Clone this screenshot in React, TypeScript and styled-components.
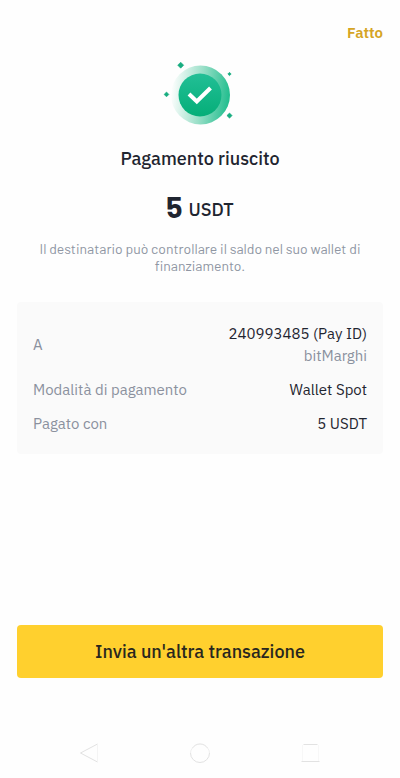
import React from "react";
import styled, { createGlobalStyle } from "styled-components";

const GlobalStyle = createGlobalStyle`
  * { box-sizing: border-box; }
  body {
    margin: 0;
    background: #fefefe;
    color: #1f2530;
    font-family: "IBM Plex Sans", Roboto, sans-serif;
  }
`;

const Screen = styled.div`
  min-height: 100vh;
  display: flex;
  flex-direction: column;
`;

const TopBar = styled.header`
  display: flex;
  justify-content: flex-end;
  padding: 21px 17px 0;
`;

const DoneButton = styled.button`
  border: 0;
  padding: 0;
  background: none;
  color: #d5a424;
  font: inherit;
  font-size: 15px;
  font-weight: 600;
  line-height: 24px;
  cursor: pointer;
`;

const Content = styled.main`
  flex: 1;
  display: flex;
  flex-direction: column;
  align-items: center;
  padding: 12px 17px 0;
`;

const SuccessIcon = styled.svg`
  display: block;
  width: 76px;
  height: 76px;
`;

const Title = styled.h1`
  margin: 14px 0 0;
  font-size: 18px;
  font-weight: 500;
  line-height: 24px;
`;

const Amount = styled.p`
  margin: 15px 0 0;
  display: flex;
  align-items: flex-end;
  gap: 6px;
  font-size: 18px;
  font-weight: 500;
  line-height: 32px;
`;

const AmountValue = styled.strong`
  font-family: "Barlow", "IBM Plex Sans", Roboto, sans-serif;
  font-size: 30px;
  font-weight: 700;
  line-height: 40px;
`;

const Note = styled.p`
  margin: 14px 0 0;
  padding: 0 20px;
  color: #8f96a3;
  font-family: "Barlow", "IBM Plex Sans", Roboto, sans-serif;
  font-size: 14px;
  line-height: 17px;
  text-align: center;
`;

const Details = styled.dl`
  align-self: stretch;
  margin: 28px 0 0;
  padding: 21px 16px 19px;
  display: flex;
  flex-direction: column;
  gap: 12px;
  border-radius: 4px;
  background: #fafafa;
  font-size: 15px;
  line-height: 22px;
`;

const DetailRow = styled.div`
  display: flex;
  align-items: center;
  justify-content: space-between;
`;

const Label = styled.dt`
  color: #8b919e;
`;

const Value = styled.dd`
  margin: 0;
  text-align: right;
`;

const Nickname = styled.div`
  color: #8b919e;
`;

const Footer = styled.footer`
  padding: 0 17px;
`;

const PrimaryButton = styled.button`
  display: block;
  width: 100%;
  height: 53px;
  border: 0;
  border-radius: 4px;
  background: #ffd02e;
  color: #28271f;
  font: inherit;
  font-size: 18px;
  font-weight: 500;
  cursor: pointer;
`;

const SystemNav = styled.nav`
  display: flex;
  justify-content: center;
  gap: 87px;
  padding: 63px 0 13px;
`;

const NavButton = styled.button`
  border: 0;
  padding: 0;
  background: none;
  cursor: pointer;

  svg {
    display: block;
    width: 24px;
    height: 24px;
    fill: none;
    stroke: #e2e2e2;
    stroke-width: 1;
  }
`;

export default function App() {
  return (
    <>
      <GlobalStyle />
      <Screen>
        <TopBar>
          <DoneButton type="button">Fatto</DoneButton>
        </TopBar>
        <Content>
          <SuccessIcon viewBox="0 0 76 76" aria-hidden="true">
            <defs>
              <linearGradient id="halo" x1="0" y1="0.45" x2="1" y2="0.55">
                <stop offset="0" stopColor="#fefefe" />
                <stop offset="0.5" stopColor="#9adfc8" />
                <stop offset="1" stopColor="#1fbd8d" />
              </linearGradient>
              <linearGradient id="disc" x1="0" y1="0" x2="0" y2="1">
                <stop offset="0" stopColor="#22bf96" />
                <stop offset="1" stopColor="#05ae78" />
              </linearGradient>
            </defs>
            <circle cx="38.5" cy="38" r="29.5" fill="url(#halo)" />
            <circle cx="38" cy="38" r="21.5" fill="url(#disc)" />
            <path d="M27 37L34.800 44.500L48.500 31" fill="none" stroke="#fff" strokeWidth="4" />
            <path d="M18.700 5.200l3 3-3 3-3-3zM4.500 35l2.400 2.400-2.400 2.400-2.400-2.400zM67.500 15.300l1.700 1.700-1.700 1.700-1.700-1.700zM67.500 56l2.600 2.600-2.600 2.600-2.600-2.600z" fill="#17ad80" stroke="#17ad80" strokeWidth="0.600" strokeLinejoin="round" />
          </SuccessIcon>
          <Title>Pagamento riuscito</Title>
          <Amount>
            <AmountValue>5</AmountValue>
            <span>USDT</span>
          </Amount>
          <Note>Il destinatario può controllare il saldo nel suo wallet di finanziamento.</Note>
          <Details>
            <DetailRow>
              <Label>A</Label>
              <Value>
                240993485 (Pay ID)
                <Nickname>bitMarghi</Nickname>
              </Value>
            </DetailRow>
            <DetailRow>
              <Label>Modalità di pagamento</Label>
              <Value>Wallet Spot</Value>
            </DetailRow>
            <DetailRow>
              <Label>Pagato con</Label>
              <Value>5 USDT</Value>
            </DetailRow>
          </Details>
        </Content>
        <Footer>
          <PrimaryButton type="button">Invia un'altra transazione</PrimaryButton>
        </Footer>
        <SystemNav aria-label="Sistema">
          <NavButton type="button" aria-label="Indietro">
            <svg viewBox="0 0 24 24"><path d="M20.500 3L3.500 12L20.500 21" /><path d="M20.500 3V21" stroke="#f4f4f4" /></svg>
          </NavButton>
          <NavButton type="button" aria-label="Home">
            <svg viewBox="0 0 24 24"><path d="M4.500 7A9 9 0 0 1 19.500 7" /><path d="M2.500 12A9.500 9.500 0 0 0 21.500 12" /><path d="M4.500 7Q2.500 9 2.500 12M19.500 7Q21.500 9 21.500 12" stroke="#f0f0f0" /></svg>
          </NavButton>
          <NavButton type="button" aria-label="App recenti">
            <svg viewBox="0 0 24 24"><path d="M4.500 3.500H18.500M2.500 20.500H20.500" /><path d="M3.500 4V20M19.500 4V20" stroke="#f7f7f7" /></svg>
          </NavButton>
        </SystemNav>
      </Screen>
    </>
  );
}
